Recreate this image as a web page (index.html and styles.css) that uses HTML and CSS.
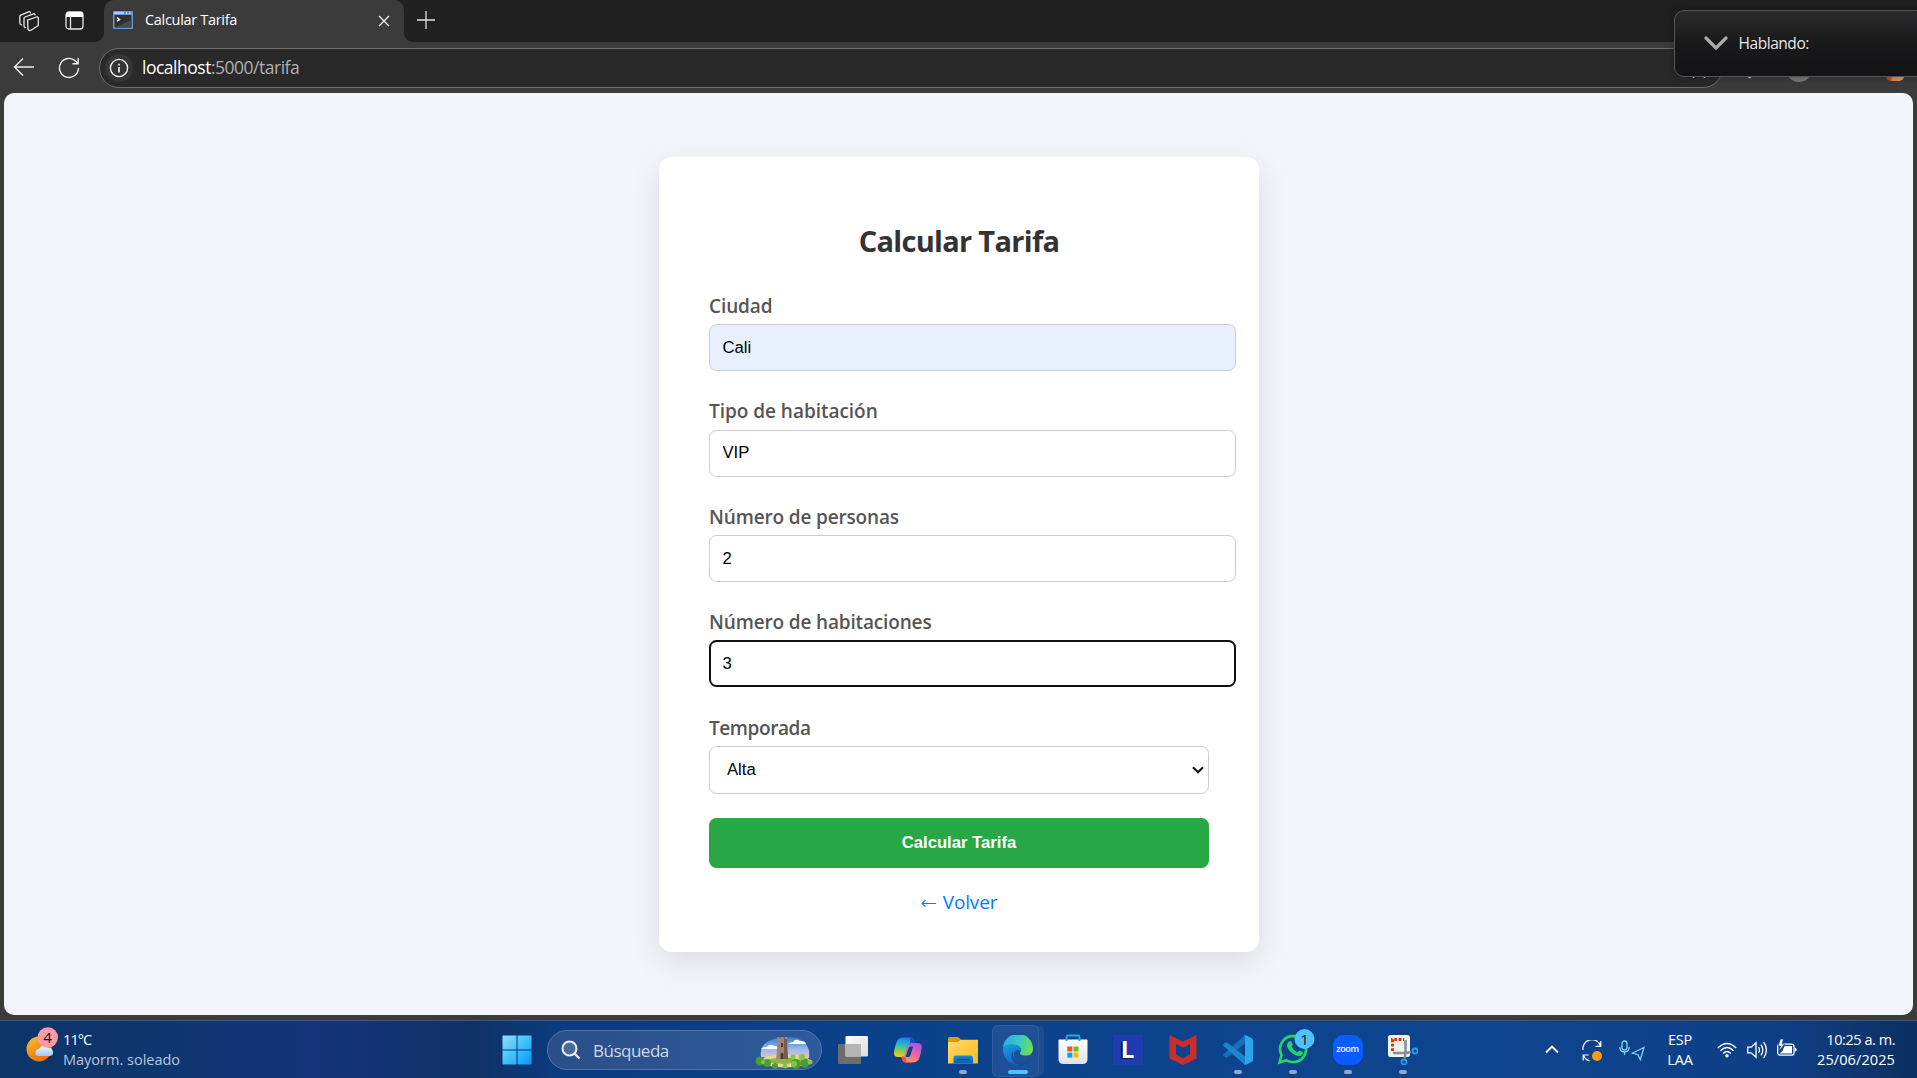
FILE: index.html
```html
<!DOCTYPE html>
<html lang="es">
<head>
<meta charset="utf-8">
<title>Calcular Tarifa</title>
<link rel="stylesheet" href="styles.css">
</head>
<body>
<header class="tabstrip">
  <div class="strip-left">
    <svg class="ico-work" width="22" height="22" viewBox="0 0 22 22" fill="none" stroke="#e6e6e6" stroke-width="1.3" stroke-linejoin="round" stroke-linecap="round"><path d="M9.5 10.2l9-3.2q1.8-.5 1.8 1.200v7.300l-7.300 4.700q-2.700 1-3-1.200z"/><path d="M7.500 17.500q-1.500 0-1.500-1.500v-7.500q0-1 1-1.500l8.500-3.200q1.300-.3 1.500 1"/><path d="M3.500 14.800q-1.700-.3-1.700-2v-6q0-1.200 1-1.700l7.700-3.300q1.700-.5 2 1"/></svg>
    <svg class="ico-tabs" width="19" height="19" viewBox="0 0 19 19"><rect x="1" y="1" width="17" height="17" rx="3" fill="none" stroke="#e6e6e6" stroke-width="1.300"/><path d="M1 6V4a3 3 0 0 1 3-3h11a3 3 0 0 1 3 3v2z" fill="#fff"/><path d="M5.500 6v12" stroke="#e6e6e6" stroke-width="1.300"/></svg>
  </div>
  <div class="tab">
    <svg width="20" height="18" viewBox="0 0 20 18"><rect width="20" height="18" rx="1" fill="#6a97d6"/><rect x="1" y="1" width="18" height="2" fill="#a9cdf5"/><rect x="11" y="1" width="2" height="1.500" fill="#5d86c8"/><rect x="14" y="1" width="2" height="1.500" fill="#5d86c8"/><rect x="17" y="1" width="2" height="1.500" fill="#d07070"/><rect x="1.500" y="4" width="17" height="12.500" fill="#303030"/><path d="M1.500 16.500L18.500 9v7.500z" fill="#484848"/><path d="M4 6.500l2.500 2L4 10.200" fill="none" stroke="#fff" stroke-width="1.500"/></svg>
    <span class="tab-title">Calcular Tarifa</span>
    <svg class="tab-close" width="12" height="12" viewBox="0 0 12 12" stroke="#f2f2f2" stroke-width="1.400"><path d="M1 1l10 10M11 1L1 11"/></svg>
  </div>
  <svg class="new-tab" width="18" height="18" viewBox="0 0 18 18" stroke="#e2e2e2" stroke-width="1.300"><path d="M9 0v18M0 9h18"/></svg>
</header>

<nav class="toolbar">
  <svg class="nav-back" width="22" height="20" viewBox="0 0 22 20" fill="none" stroke="#ececec" stroke-width="1.400"><path d="M21 10H1.500M10 1.500L1.500 10l8.500 8.500"/></svg>
  <svg class="nav-reload" width="22" height="22" viewBox="0 0 22 22" fill="none" stroke="#ececec" stroke-width="1.400"><path d="M20.500 11a9.500 9.500 0 1 1-2.700-6.700l1.700 2M20.200 1v5.700h-5.700"/></svg>
  <div class="address">
    <span class="site-info"><svg width="20" height="20" viewBox="0 0 20 20" fill="none" stroke="#f0f0f0" stroke-width="1.400"><circle cx="10" cy="10" r="8.600"/><path d="M10 9v5.500M10 5.700v1.700" stroke-width="1.700"/></svg></span>
    <span class="url"><b>localhost</b>:5000/tarifa</span>
    <svg class="star" width="20" height="20" viewBox="0 0 20 20" fill="none" stroke="#ddd" stroke-width="1.400"><path d="M10 1.500l2.600 5.500 6 .8-4.400 4.100 1.100 6L10 15l-5.300 2.900 1.100-6L1.400 7.800l6-.8z"/></svg>
  </div>
  <svg class="favs" width="24" height="22" viewBox="0 0 24 22" fill="none" stroke="#ddd" stroke-width="1.500"><path d="M6 20l1-5-4-4 6-1 3-6 3 6h6M14 14h7M6 20l3-2"/></svg>
  <span class="avatar"></span>
  <svg class="menu-dots" width="20" height="4" viewBox="0 0 20 4" fill="#ddd"><circle cx="2" cy="2" r="1.500"/><circle cx="10" cy="2" r="1.500"/><circle cx="18" cy="2" r="1.500"/></svg>
  <span class="copilot-edge"></span>
</nav>

<main class="viewport">
  <form class="card">
    <h2 class="title">Calcular Tarifa</h2>
    <div class="field"><label class="l1" for="a">Ciudad</label><input id="a" class="filled" value="Cali"></div>
    <div class="field"><label class="l2" for="b">Tipo de habitación</label><input id="b" value="VIP"></div>
    <div class="field"><label class="l3" for="c">Número de personas</label><input id="c" value="2"></div>
    <div class="field"><label class="l4" for="d">Número de habitaciones</label><input id="d" class="active" value="3"></div>
    <div class="field last"><label class="l5">Temporada</label>
      <div class="select"><span>Alta</span><svg width="12" height="8" viewBox="0 0 12 8" fill="none" stroke="#111" stroke-width="2.100"><path d="M1 1.200l5 5 5-5"/></svg></div>
    </div>
    <button class="submit" type="button">Calcular Tarifa</button>
    <a class="back"><svg width="15" height="9" viewBox="0 0 15 9" fill="none" stroke="#007bff" stroke-width="1.200"><path d="M15 4.500H1.500M4.500 1.200L1.200 4.500l3.300 3.300"/></svg><span>Volver</span></a>
  </form>
</main>

<footer class="taskbar">
  <div class="weather">
    <svg width="34" height="36" viewBox="0 0 34 36"><defs><linearGradient id="sun" x1="0" y1="0" x2=".5" y2="1"><stop offset="0" stop-color="#f4c534"/><stop offset="1" stop-color="#ee6f0c"/></linearGradient><linearGradient id="cl" x1="0" y1="0" x2="0" y2="1"><stop offset="0" stop-color="#f0f5ff"/><stop offset="1" stop-color="#a5c7f3"/></linearGradient></defs><circle cx="13" cy="22" r="12.500" fill="url(#sun)"/><path d="M13 29a3.500 3.500 0 0 1 0-7 5 5 0 0 1 9-1 4 4 0 0 1 5 4 3.500 3.500 0 0 1-3 4z" fill="url(#cl)"/><circle cx="21.800" cy="10.500" r="10.200" fill="#ff99a4"/><text class="badge-text" x="21.500" y="16" text-anchor="middle">4</text></svg>
    <div class="weather-text"><span class="temp">11°C</span><span class="cond">Mayorm. soleado</span></div>
  </div>

  <div class="apps">
    <div class="app"><svg width="30" height="30" viewBox="0 0 30 30"><defs><linearGradient id="win" x1="0" y1="0" x2="1" y2="1"><stop offset="0" stop-color="#8be2ff"/><stop offset=".5" stop-color="#3fc1fb"/><stop offset="1" stop-color="#0a97fa"/></linearGradient></defs><path d="M1 .5h13.500v14H.5V1zM15.500.5H29l.5.5v13.500h-14zM.5 15.500h14v14H1l-.5-.5zM15.500 15.500h14V29l-.5.5H15.500z" fill="url(#win)"/></svg></div>
    <div class="search">
      <svg width="20" height="20" viewBox="0 0 20 20" fill="rgba(255,255,255,.15)" stroke="#e8edf5" stroke-width="2"><circle cx="8.500" cy="8.500" r="7"/><path d="M13.500 13.500l5 5" stroke-width="2.300"/></svg>
      <span class="search-text">Búsqueda</span>
      <svg class="castle" width="58" height="34" viewBox="0 0 58 34"><defs><linearGradient id="sky" x1="0" y1="0" x2="0" y2="1"><stop offset="0" stop-color="#3579cc"/><stop offset=".6" stop-color="#9dbcea"/><stop offset="1" stop-color="#e8b9cf"/></linearGradient></defs><path d="M6 22Q4 10 16 5Q27 0 42 3Q56 8 54 23z" fill="url(#sky)"/><path d="M6 14q1-2 6-2 3-4 7-1 4 0 4 3zM33 9q2-2 5-2 3-4 7-1 6 0 6 3z" fill="#fff"/><ellipse cx="30" cy="26" rx="25" ry="6.500" fill="#d7e08c"/><path d="M8 26q20-7 42 0-20 6-42 0" fill="#8fb444"/><path d="M14 29q15 3 30-1" stroke="#e5dc98" stroke-width="2" fill="none"/><path d="M21 24l1.500-14V2h1.500v2h1.500V2h3v2h1.500V2h2v10l1 12z" fill="#a48474"/><path d="M29 4h3l1 20h-4z" fill="#785b55"/><path d="M25.500 24v-5q1.500-3 3 0v5zM26 8h2v4h-2z" fill="#49373b"/><g fill="#4f9b35"><circle cx="5" cy="26" r="4.500"/><circle cx="12" cy="28" r="4"/><circle cx="20" cy="31" r="3"/><circle cx="41" cy="29" r="5"/><circle cx="50" cy="28" r="4.500"/></g><g fill="#83c64c"><circle cx="8" cy="27" r="2"/><circle cx="39" cy="29" r="3"/><circle cx="38" cy="22" r="2.500"/><circle cx="47" cy="22" r="3"/><circle cx="55" cy="27" r="2.500"/><circle cx="30" cy="31" r="2.500"/></g></svg>
    </div>
    <div class="app first"><svg width="30" height="28" viewBox="0 0 30 28"><defs><linearGradient id="tv" x1="0" y1="0" x2="1" y2="1"><stop offset="0" stop-color="#fff"/><stop offset="1" stop-color="#dcdcdc"/></linearGradient></defs><rect x="0" y="8" width="23" height="20" rx="1" fill="#6d6d6d"/><rect x="7.500" y="0" width="22.500" height="20.500" rx="1" fill="url(#tv)"/><path d="M7.500 8H23v12.500H7.500z" fill="#b4b4b4"/></svg></div>
    <div class="app"><svg width="30" height="28" viewBox="0 0 30 28"><defs><linearGradient id="c1" x1=".5" y1="0" x2=".3" y2="1"><stop offset="0" stop-color="#1b7fe0"/><stop offset=".35" stop-color="#25b4d8"/><stop offset=".65" stop-color="#7ccb55"/><stop offset="1" stop-color="#f5c817"/></linearGradient><linearGradient id="c2" x1=".7" y1="0" x2=".3" y2="1"><stop offset="0" stop-color="#a755e8"/><stop offset=".5" stop-color="#ef5fa0"/><stop offset="1" stop-color="#ffa052"/></linearGradient></defs><path d="M11 1.500h7q2.500 0 3.200 3l.8 2.500h-3q-3 0-4 3l-2.500 8q-1 3-4 3H5q-4.500 0-4-5 .8-6 3-11 1.700-3.500 7-3.500z" fill="url(#c1)"/><path d="M17 1.500h2q2 0 2.700 3l.8 2.500h-3.500q-1.500 0-2 1z" fill="#1752c5"/><path d="M19 26.500h-6q-3 0-3.800-3L8.500 21q2.500 0 3.500-3l2.500-8q1-3 4-3H24q5.500 0 4.700 5-.8 6-2.700 11-1.800 3.500-7 3.500z" fill="url(#c2)"/><path d="M15.500 12.500L12.500 21h3.200q1.200 0 1.800-2l2.500-8.500h-2.500q-1.300 0-2 2z" fill="#0d4088"/><path d="M8.500 21H12l2 5.500h-1.500q-2.600 0-3.300-3z" fill="#ed4a4a"/></svg></div>
    <div class="app run"><svg width="30" height="28" viewBox="0 0 30 28"><defs><linearGradient id="fo" x1="0" y1="0" x2="1" y2="1"><stop offset="0" stop-color="#ffdc6a"/><stop offset="1" stop-color="#fbb91c"/></linearGradient><linearGradient id="fb" x1="0" y1="0" x2="0" y2="1"><stop offset="0" stop-color="#168ae0"/><stop offset="1" stop-color="#0663b8"/></linearGradient></defs><path d="M0 8V2.500Q0 1 1.500 1h8q1 0 1.700.8L14 5v3z" fill="#dd9a08"/><path d="M0 6h10l3-2.300h17V27.500H0z" fill="url(#fo)"/><path d="M5.500 27.500V22q0-2.500 2.500-2.500h14.500q2.500 0 2.500 2.500v5.500z" fill="url(#fb)"/><path d="M9 23.500h12.500" stroke="#074f92" stroke-width="1.500"/></svg></div>
    <div class="app run current"><svg width="30" height="30" viewBox="0 0 30 30"><defs><linearGradient id="e1" x1="0" y1=".3" x2="1" y2=".5"><stop offset="0" stop-color="#2fa9e8"/><stop offset=".5" stop-color="#35c9c8"/><stop offset="1" stop-color="#6edf4d"/></linearGradient><linearGradient id="e2" x1="0" y1="0" x2=".5" y2="1"><stop offset="0" stop-color="#1aa2e4"/><stop offset="1" stop-color="#0d63bd"/></linearGradient></defs><path d="M0 13A15 15 0 0 1 30 14.500q-.5 6-7 6-5.500 0-6.300-2.300 2-1.500 1.300-4.200-1.500-4-8-4.500Q3 9.500 0 13z" fill="url(#e1)"/><path d="M0 14q2-4.700 9-4.700 7.500.5 8.700 4.700.3 1.300-.2 2.500-2-2.500-5-.5-3 3-.5 7.500Q15 28.500 21 29 6 33 1 20q-1-3-1-6z" fill="url(#e2)"/><path d="M10.500 16q-2 6 3 9.500 6 3.500 13.500-.5 1.200-.3.700 1Q23 32 15 29.500 8 27 8.500 20q.3-3 2-4z" fill="#124f9e"/></svg></div>
    <div class="app"><svg class="store" width="30" height="30" viewBox="0 0 30 30"><defs><linearGradient id="st" x1="0" y1="0" x2="0" y2="1"><stop offset="0" stop-color="#fff"/><stop offset="1" stop-color="#dfe2e6"/></linearGradient></defs><path d="M.5 6q0-.5.500-.5h28q.5 0 .5.500v19q0 5-5 5h-19q-5 0-5-5z" fill="url(#st)"/><path d="M8.500 7V3q0-1.500 1.500-1.500h10q1.500 0 1.500 1.500v4" fill="none" stroke="#20a9e5" stroke-width="1.800"/><path d="M9.300 12.500h5v5h-5z" fill="#f25022"/><path d="M15.500 12.500h5v5h-5z" fill="#7fba00"/><path d="M9.300 18.600h5v5h-5z" fill="#00a4ef"/><path d="M15.500 18.600h5v5h-5z" fill="#ffb900"/></svg></div>
    <div class="app"><span class="l-app">L</span></div>
    <div class="app"><svg width="28" height="30" viewBox="0 0 28 30"><path d="M.5 0L14 6.500 27.500 0v23.500L14 30 .5 23.500zM7 9v10.500l7 3.800 7-3.800V9l-7 3.700z" fill="#c5302d"/></svg></div>
    <div class="app run"><svg width="30" height="30" viewBox="0 0 30 30"><path d="M22 0v8.500L4 22.500q-1 .7-1.800 0l-1.500-1.400q-1-1 0-2z" fill="#1073b9"/><path d="M22 30v-8.500L4 7.500q-1-.7-1.800 0L.7 8.900q-1 1 0 2z" fill="#1787cf"/><path d="M20.500.8Q22-.3 23.500.5l5 2.400q1.500.8 1.500 2.200v19.800q0 1.400-1.500 2.200l-5 2.400q-1.500.7-3-.5 1.500.3 1.500-1.500v-25q0-1.500-1.500-1.700z" fill="#2ba6ee"/></svg></div>
    <div class="app run"><svg class="wa" width="38" height="37" viewBox="0 0 38 37"><path d="M2.500 34.500l2-7.500a13 13 0 1 1 5 5.300z" fill="none" stroke="#25d366" stroke-width="2.700"/><path d="M11 14.500q1.500-2.200 3-1.200l1.700 3.200q.2 1-1.200 2.200 2 4 6 5.500 1.500-1.700 2.200-1.700l3.300 1.700q.7 2-1.500 3.300-3.500 2-8.500-1.800-5.500-4.200-6-7.700-.2-2 1-3.500z" fill="#25d366"/><circle cx="27.500" cy="11" r="10" fill="#4cc2ff"/><text class="badge-text" x="27.500" y="16.500" text-anchor="middle">1</text></svg></div>
    <div class="app run"><span class="zoom-app">zoom</span></div>
    <div class="app run"><svg width="30" height="30" viewBox="0 0 30 30"><rect x="0" y="0" width="22" height="22" rx="2.500" fill="#f3f1f1"/><path d="M4.500 16V4.500H16" fill="none" stroke="#d83b01" stroke-width="3" stroke-dasharray="2.800 1.600"/><path d="M17.500 5v13.500l-1 5M5 18h13l5-1" stroke="#878e96" stroke-width="2.500" fill="none"/><circle cx="16" cy="27" r="2.500" fill="none" stroke="#1ca0e6" stroke-width="1.800"/><circle cx="27" cy="16" r="2.500" fill="none" stroke="#1ca0e6" stroke-width="1.800"/></svg></div>
  </div>

  <div class="tray">
    <svg class="t-chev" width="14" height="9" viewBox="0 0 14 9" fill="none" stroke="#fff" stroke-width="1.900"><path d="M1 7.500l6-6 6 6"/></svg>
    <svg class="t-sync" width="20" height="22" viewBox="0 0 20 22" fill="none" stroke="#fff" stroke-width="1.200"><path d="M1 10A9 9 0 0 1 18.500 6M18.800 1v5.300h-5.300M1.200 20.500V15h5.500M1.500 15.500q2 4.500 6 5.300"/><circle cx="15" cy="16" r="5" fill="#ff9a0c" stroke="none"/></svg>
    <svg class="t-mic" width="26" height="21" viewBox="0 0 26 21" fill="none" stroke="#7fd6f7" stroke-width="1.300"><rect x="3" y="1" width="5" height="9" rx="2.500"/><path d="M.8 7q0 5 4.700 5t4.700-5M5.500 12v3M25 7.500L13.500 13l5.500 1.700 2.300 5z"/></svg>
    <div class="lang"><span class="esp">ESP</span><span>LAA</span></div>
    <svg class="t-wifi" width="20" height="16" viewBox="0 0 20 16" fill="none" stroke="#fff" stroke-width="1.400"><path d="M.8 6q9.200-9 18.400 0M3.500 8.700q6.500-6.500 13 0M6.200 11.400q3.800-3.800 7.600 0"/><circle cx="10" cy="13.700" r="1.700" fill="#fff" stroke="none"/></svg>
    <svg class="t-vol" width="21" height="18" viewBox="0 0 21 18" fill="none" stroke="#fff" stroke-width="1.300"><path d="M.7 6.200h3.500L9 1.700v14.600l-4.800-4.500H.7zM11.500 6q2 3 0 6M14 3.700q3.700 5.300 0 10.600M16.700 1.200q5.500 7.800 0 15.600"/></svg>
    <svg class="t-bat" width="20" height="18" viewBox="0 0 20 18"><rect x=".7" y="5.200" width="16.300" height="11" rx="2.500" fill="none" stroke="#fff" stroke-width="1.300"/><path d="M7.500 7H15v7.500H2.500l3-2.500z" fill="#fff"/><path d="M18 9q1.800 0 1.800 1.700T18 12.500z" fill="#fff"/><path d="M3.500 0L1 7h2.500L2 12.500 7.500 5H5l1.500-5z" fill="#fff" stroke="#0e408a" stroke-width=".7"/></svg>
    <div class="clock"><span class="time">10:25 a. m.</span><span class="date">25/06/2025</span></div>
  </div>
</footer>

<aside class="speaking">
  <svg width="24" height="14" viewBox="0 0 24 14" fill="none" stroke="#ababab" stroke-width="3.200" stroke-linecap="round" stroke-linejoin="round"><path d="M2 2l10 10L22 2"/></svg>
  <span>Hablando:</span>
</aside>
</body>
</html>
```
FILE: styles.css
```css
* { box-sizing: border-box; }
body {
  margin: 0;
  width: 1917px;
  height: 1078px;
  overflow: hidden;
  position: relative;
  display: flex;
  flex-direction: column;
  background: #3b3b3b;
  font-family: "Open Sans", "Noto Sans", sans-serif;
}
svg { display: block; flex: none; }
span { white-space: nowrap; }

/* Browser chrome */
.tabstrip { height: 42px; display: flex; background: #3b3b3b; flex: none; }
.strip-left {
  width: 104px;
  background: #202020;
  border-bottom-right-radius: 9px;
  display: flex;
  padding: 10px 0 0 18px;
  gap: 24px;
}
.ico-tabs { margin: 1px 0 0 1px; }
.tab {
  width: 300px;
  display: flex;
  align-items: flex-start;
  padding: 11px 14px 0 9px;
  background: linear-gradient(#202020, #202020) 0 0 / 10px 10px no-repeat, linear-gradient(#202020, #202020) 100% 0 / 10px 10px no-repeat;
  position: relative;
  z-index: 0;
}
.tab::before {
  content: "";
  position: absolute;
  inset: 0;
  z-index: -1;
  background: #3b3b3b;
  border-radius: 10px 10px 0 0;
}
.tab-title { color: #fff; font-size: 14.500px; line-height: 20px; margin: -1px 0 0 12px; letter-spacing: -.31px; }
.tab-close { margin: 4px 0 0 auto; }
.new-tab {
  box-sizing: content-box;
  padding: 11px 1482px 13px 13px;
  background: #202020;
  border-bottom-left-radius: 9px;
}
.toolbar { height: 51px; flex: none; display: flex; align-items: flex-start; }
.nav-back { margin: 15px 0 0 13px; }
.nav-reload { margin: 15px 0 0 23px; }
.address {
  margin: 6px 0 0 19px;
  width: 1624px;
  height: 40px;
  border: 1px solid #6c6c6c;
  border-radius: 20px;
  background: #292929;
  display: flex;
  align-items: center;
  padding: 0 13px 0 5px;
}
.site-info { width: 28px; height: 28px; border-radius: 50%; background: #363636; display: grid; place-items: center; }
.url { color: #b0b0b0; font-size: 17.500px; margin: -2px 0 0 9px; letter-spacing: -.49px; }
.url b { font-weight: 400; color: #fff; }
.star { margin: 2px 0 0 auto; }
.favs { margin: 16px 0 0 20px; }
.avatar { width: 26px; height: 26px; border-radius: 50%; background: #7d7a77; margin: 14px 0 0 19px; }
.menu-dots { margin: 25px 0 0 30px; }
.copilot-edge { width: 18px; height: 22px; border-radius: 5px; background: linear-gradient(90deg, #d9402a 20%, #f08a4a 40%, #e8a25a); margin: 17px 0 0 24px; }

/* Page */
.viewport {
  margin: 0 4px 5px;
  height: 922px;
  flex: none;
  background: #f4f5fa;
  border-radius: 10px;
  padding-top: 64px;
}
.card {
  width: 600px;
  height: 795px;
  margin: 0 auto;
  position: relative;
  left: .5px;
  padding: 64px 50px 0;
  background: #fff;
  border-radius: 12.500px;
  box-shadow: 0 10px 31px rgba(0, 0, 0, .1);
}
.title { margin: 0 0 32px; font-size: 29px; line-height: 40px; font-weight: 700; text-align: center; color: #333; letter-spacing: -.7px; }
.field { margin-bottom: 27.100px; }
.field.last { margin-bottom: 24.600px; }
label { display: block; height: 27px; line-height: 27px; margin-bottom: 4.300px; font-size: 19px; font-weight: 600; color: #555; letter-spacing: -.15px; }
.l1 { letter-spacing: -.1px; }
.l2 { letter-spacing: -.03px; }
.l5 { letter-spacing: -.42px; }
input {
  display: block;
  width: 527px;
  height: 47px;
  border: 1px solid #ccc;
  border-radius: 7.500px;
  padding: 0 12.500px;
  background: #fff;
  color: #000;
  font: 16.670px "Liberation Sans", Arial, sans-serif;
}
.filled { background: #e8f0fe; padding-top: 1px; }
.active { border: 2px solid #101010; padding: 0 11.500px; }
.select {
  height: 48px;
  border: 1px solid #ccc;
  border-radius: 7.500px;
  display: flex;
  align-items: center;
  justify-content: space-between;
  padding: 1px 4px 0 17px;
  font: 16.670px "Liberation Sans", Arial, sans-serif;
}
.submit {
  display: block;
  width: 500px;
  height: 50px;
  border: 0;
  border-radius: 7.500px;
  background: #28a745;
  color: #fff;
  font: bold 16.670px "Liberation Sans", Arial, sans-serif;
  margin: 0 0 20.500px;
}
.back { display: flex; justify-content: center; align-items: center; gap: 7px; line-height: 27px; font-size: 19px; color: #007bff; letter-spacing: -.15px; }
.back svg { margin-top: 2px; }

/* Taskbar */
.taskbar {
  height: 58px;
  flex: none;
  display: flex;
  border-top: 1px solid #40577f;
  background: linear-gradient(90deg, #0c3568 0, #0e3671 200px, #15347c 310px, #0f3166 470px, #0b3b80 560px, #0b408a 850px, #0f4490 1500px, #0e3f86 1780px, #0d2f60 1917px);
  color: #fff;
  font-size: 14.500px;
  line-height: 20px;
}
.weather { width: 489px; padding: 6px 0 0 26px; display: flex; gap: 3px; }
.weather-text { display: flex; flex-direction: column; padding-top: 3px; }
.temp { letter-spacing: -.9px; }
.cond { color: #b9c6dc; letter-spacing: 0; }
.badge-text { font: 15px "Open Sans", sans-serif; fill: #111; }
.apps { display: flex; width: 942px; }
.app { width: 55px; height: 57px; display: grid; place-items: center; position: relative; padding-bottom: 0; }
.app.first { margin-left: 3px; }
.app.run::after { content: ""; position: absolute; left: 24px; top: 49px; width: 8px; height: 4px; border-radius: 2px; background: #93a8cd; }
.app.current::after { left: 17.500px; width: 20px; background: #4cc2ff; }
.app.current { z-index: 0; }
.app.current::before {
  content: "";
  position: absolute;
  z-index: -1;
  left: 2px;
  top: 4px;
  width: 45px;
  height: 50px;
  border-radius: 6px;
  border: 1px solid rgba(255, 255, 255, .08);
  background: rgba(255, 255, 255, .08);
  box-shadow: 6px 0 0 -1px rgba(255, 255, 255, .07);
}
.search {
  width: 275px;
  height: 40px;
  margin: 9px 0 0 3px;
  border-radius: 20px;
  border: 1px solid #5575aa;
  background: linear-gradient(90deg, #2a4f88, #2d5a9c);
  display: flex;
  align-items: center;
  padding: 0 8px 0 13px;
}
.search-text { font-size: 17px; margin: 1px 0 0 12px; color: #cfd9e8; letter-spacing: -.5px; }
.castle { margin-left: auto; margin-top: 4px; }
.store { margin-top: -1px; }
.l-app {
  width: 30px;
  height: 30px;
  background: #1f3bb0;
  font: bold 24px/28px "Open Sans", sans-serif;
  text-align: center;
  text-shadow: -2px 1px 0 #0b1f5c;
}
.wa { margin: -6px -7px 0 0; }
.zoom-app {
  width: 30px;
  height: 30px;
  border-radius: 11px;
  background: #0b5cff;
  font: 600 9px/27px "Open Sans", sans-serif;
  text-align: center;
  letter-spacing: -.4px;
}
.tray { display: flex; flex: 1; }
.t-chev { margin: 24px 0 0 114px; }
.t-sync { margin: 19px 0 0 23px; }
.t-mic { margin: 19px 0 0 17px; }
.lang { width: 48px; margin-left: 11px; padding-top: 9px; display: flex; flex-direction: column; text-align: center; letter-spacing: -.2px; }
.t-wifi { margin: 21px 0 0 13px; }
.t-vol { margin: 20px 0 0 10px; }
.t-bat { margin: 18px 0 0 9px; }
.clock { margin-left: auto; padding: 9px 22px 0 0; display: flex; flex-direction: column; text-align: right; }
.time { letter-spacing: -.45px; }
.date { letter-spacing: .1px; }

/* Floating meeting indicator */
.speaking {
  position: absolute;
  left: 1673.500px;
  top: 10px;
  width: 260px;
  height: 67px;
  border: 1.500px solid #555;
  border-radius: 10px;
  background: linear-gradient(#2b2b2c, #19191b 50%, #131315);
  box-shadow: 0 0 10px rgba(0, 0, 0, .35);
  display: flex;
  align-items: center;
  padding: 0 0 2px 29px;
  gap: 11px;
  color: #e6e6e6;
  font-size: 15.500px;
  font-weight: 400;
  letter-spacing: -.45px;
}
```
